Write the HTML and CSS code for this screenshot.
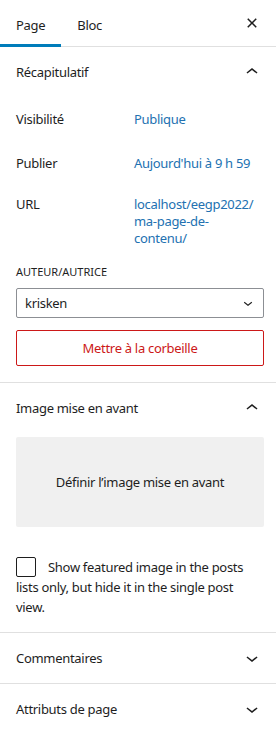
FILE: index.html
```html
<!DOCTYPE html>
<html lang="fr">
<head>
    <meta charset="UTF-8">
    <meta name="viewport" content="width=device-width, initial-scale=1.0">
    <title>Réglages de la page</title>
    <link rel="stylesheet" href="styles.css">
</head>
<body>
    <div class="sidebar">
        <div class="tabs">
            <button class="tab active">Page</button>
            <button class="tab">Bloc</button>
            <button class="icon-btn close">
                <svg viewBox="0 0 24 24" width="24" height="24"><path d="M12 13.06l3.712 3.713 1.061-1.06L13.061 12l3.712-3.712-1.06-1.06L12 10.938 8.288 7.227l-1.061 1.06L10.939 12l-3.712 3.712 1.06 1.061L12 13.061z"/></svg>
            </button>
        </div>

        <div class="panel">
            <button class="panel-title">
                <span>Récapitulatif</span>
                <svg viewBox="0 0 24 24" width="24" height="24"><path d="M6.5 12.4L12 8l5.5 4.4-.9 1.2L12 10l-4.6 3.6-.9-1.2z"/></svg>
            </button>
            <div class="panel-body">
                <div class="row first">
                    <span class="label">Visibilité</span>
                    <a class="value" href="#">Publique</a>
                </div>
                <div class="row second">
                    <span class="label">Publier</span>
                    <a class="value" href="#">Aujourd'hui à 9 h 59</a>
                </div>
                <div class="row">
                    <span class="label">URL</span>
                    <a class="value" href="#">localhost/eegp2022/<br>ma-page-de-<br>contenu/</a>
                </div>
                <div class="author">
                    <label class="caps" for="author">Auteur/autrice</label>
                    <div class="select">
                        <span>krisken</span>
                        <svg viewBox="0 0 24 24" width="18" height="18"><path d="M17.5 11.6L12 16l-5.5-4.4.9-1.2L12 14l4.6-3.6 1 1.2z"/></svg>
                    </div>
                </div>
                <button class="trash">Mettre à la corbeille</button>
            </div>
        </div>

        <div class="panel">
            <button class="panel-title">
                <span>Image mise en avant</span>
                <svg viewBox="0 0 24 24" width="24" height="24"><path d="M6.5 12.4L12 8l5.5 4.4-.9 1.2L12 10l-4.6 3.6-.9-1.2z"/></svg>
            </button>
            <div class="panel-body image-body">
                <button class="featured">Définir l’image mise en avant</button>
                <p class="check-line"><span class="checkbox"></span>Show featured image in the posts lists only, but hide it in the single post view.</p>
            </div>
        </div>

        <div class="panel">
            <button class="panel-title">
                <span>Commentaires</span>
                <svg viewBox="0 0 24 24" width="24" height="24"><path d="M17.5 11.6L12 16l-5.5-4.4.9-1.2L12 14l4.6-3.6 1 1.2z"/></svg>
            </button>
        </div>

        <div class="panel">
            <button class="panel-title">
                <span>Attributs de page</span>
                <svg viewBox="0 0 24 24" width="24" height="24"><path d="M17.5 11.6L12 16l-5.5-4.4.9-1.2L12 14l4.6-3.6 1 1.2z"/></svg>
            </button>
        </div>
    </div>
</body>
</html>
```

FILE: styles.css
```css
body {
    background-color: #FFFFFF;
    color: #1E1E1E;
    font-family: 'Noto Sans', 'Open Sans', sans-serif;
    font-size: 13px;
    letter-spacing: -0.3px;
    margin: 0;
    padding: 0;
}
button {
    background: none;
    border: none;
    color: inherit;
    cursor: pointer;
    font: inherit;
    letter-spacing: inherit;
    margin: 0;
    padding: 0;
}
svg {
    display: block;
    fill: #1E1E1E;
}
.sidebar {
    width: 276px;
}
.tabs {
    border-bottom: 1px solid #E0E0E0;
    display: flex;
    align-items: center;
    height: 46px;
}
.tab {
    height: 46px;
    padding: 3px 16px 0;
    position: relative;
}
.tab.active::after {
    background-color: #007CBA;
    bottom: -1px;
    content: "";
    height: 3px;
    left: 0;
    position: absolute;
    right: 0;
}
.close {
    margin-left: auto;
    margin-right: 12px;
}
.panel {
    border-bottom: 1px solid #E0E0E0;
}
.panel-title {
    align-items: center;
    display: flex;
    height: 50px;
    justify-content: space-between;
    padding: 0 12px 0 16px;
    text-align: left;
    width: 100%;
}
.panel-body {
    padding: 2px 12px 16px 16px;
}
.row {
    display: flex;
    line-height: 17px;
    padding: 12px 0;
}
.row.first {
    padding-bottom: 13px;
}
.row.second {
    padding-top: 14px;
}
.label {
    flex: 0 0 118px;
}
.value {
    color: #2271B1;
    flex: 1;
    text-decoration: none;
}
.author {
    padding-top: 5px;
}
.caps {
    display: block;
    font-size: 11px;
    letter-spacing: 0;
    line-height: 16px;
    margin-bottom: 8px;
    text-transform: uppercase;
}
.select {
    align-items: center;
    border: 1px solid #8C8F94;
    border-radius: 2px;
    display: flex;
    height: 28px;
    justify-content: space-between;
    padding: 0 6px 0 8px;
}
.trash {
    border: 1px solid #CC1818;
    border-radius: 2px;
    color: #CC1818;
    height: 36px;
    margin-top: 12px;
    width: 100%;
}
.image-body {
    padding-bottom: 15px;
    padding-top: 4px;
}
.featured {
    background-color: #F0F0F0;
    border-radius: 2px;
    height: 90px;
    width: 100%;
}
.check-line {
    line-height: 20px;
    margin: 30px 0 0;
}
.checkbox {
    border: 1px solid #1E1E1E;
    border-radius: 2px;
    box-sizing: border-box;
    display: inline-block;
    height: 20px;
    margin-right: 12px;
    vertical-align: -5px;
    width: 20px;
}
```
